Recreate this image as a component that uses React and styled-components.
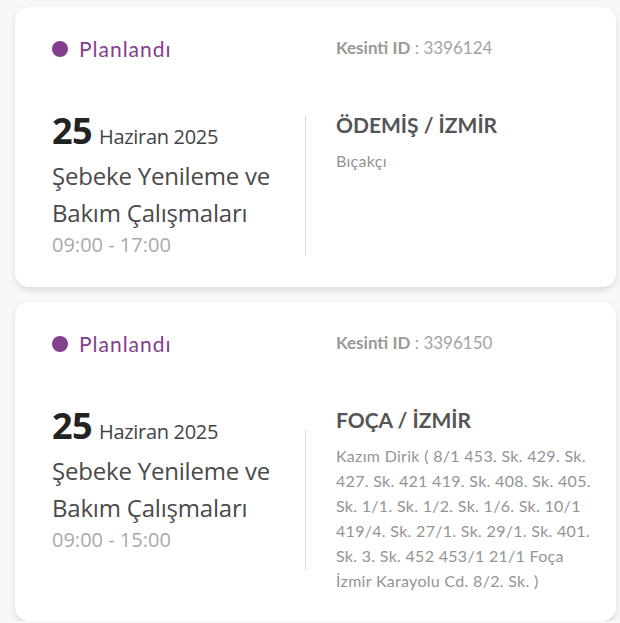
import React from "react";
import styled, { createGlobalStyle } from "styled-components";

const Global = createGlobalStyle`
  html, body { margin: 0; padding: 0; background: #f8f8f8; }
  body { font-family: "Lato", "Noto Sans", sans-serif; }
`;

const List = styled.div`
  display: flex;
  flex-direction: column;
  gap: 15px;
  width: 601px;
  padding: 7px 0 0 15px;
`;

const Card = styled.div`
  background: #fff;
  border-radius: 14px;
  box-shadow: 0 3px 6px rgba(0, 0, 0, 0.12);
  padding: 30px 20px 28px 37px;
  display: grid;
  grid-template-columns: 253px 1px 1fr;
  grid-template-rows: auto auto;
  row-gap: 50px;
`;

const Status = styled.div`
  grid-column: 1;
  display: flex;
  align-items: center;
  gap: 11px;
  font-family: "Lato", sans-serif;
  font-size: 21px;
  line-height: 24px;
  letter-spacing: 1px;
  color: #833e8e;
`;

const Dot = styled.span`
  width: 16px;
  height: 16px;
  border-radius: 50%;
  background: #833e8e;
  flex: none;
`;

const IdLine = styled.div`
  grid-column: 3;
  padding-left: 30px;
  font-family: "Lato", sans-serif;
  font-size: 17px;
  line-height: 22px;
  color: #a3a3a3;
`;

const IdLabel = styled.span`
  font-weight: 700;
  color: #999;
`;

const Left = styled.div`
  grid-column: 1;
  padding-right: 15px;
  font-family: "Open Sans", "Noto Sans", sans-serif;
`;

const DateLine = styled.div`
  display: flex;
  align-items: baseline;
  gap: 7px;
  line-height: 40px;
`;

const Day = styled.span`
  font-size: 36px;
  font-weight: 700;
  color: #222;
  letter-spacing: -0.6px;
`;

const Month = styled.span`
  font-size: 20px;
  color: #444;
  letter-spacing: -0.3px;
`;

const Title = styled.div`
  font-size: 24px;
  line-height: 37px;
  color: #4a4a4a;
  letter-spacing: -0.2px;
`;

const Time = styled.div`
  font-size: 20px;
  line-height: 28px;
  color: #aaa;
  letter-spacing: 0;
`;

const Divider = styled.div`
  grid-column: 2;
  align-self: center;
  width: 1px;
  height: 140px;
  background: #dcdcdc;
`;

const Right = styled.div`
  grid-column: 3;
  padding-left: 30px;
  font-family: "Lato", sans-serif;
`;

const Place = styled.div`
  font-size: 21px;
  font-weight: 700;
  line-height: 28px;
  color: #555;
`;

const Address = styled.div`
  margin-top: 9px;
  font-size: 16px;
  line-height: 25px;
  letter-spacing: 0.3px;
  color: #949494;
`;

const items = [
  {
    id: "3396124",
    day: "25",
    month: "Haziran 2025",
    title: "Şebeke Yenileme ve Bakım Çalışmaları",
    time: "09:00 - 17:00",
    place: "ÖDEMİŞ / İZMİR",
    address: "Bıçakçı",
  },
  {
    id: "3396150",
    day: "25",
    month: "Haziran 2025",
    title: "Şebeke Yenileme ve Bakım Çalışmaları",
    time: "09:00 - 15:00",
    place: "FOÇA / İZMİR",
    address:
      "Kazım Dirik ( 8/1 453. Sk. 429. Sk. 427. Sk. 421 419. Sk. 408. Sk. 405. Sk. 1/1. Sk. 1/2. Sk. 1/6. Sk. 10/1 419/4. Sk. 27/1. Sk. 29/1. Sk. 401. Sk. 3. Sk. 452 453/1 21/1 Foça İzmir Karayolu Cd. 8/2. Sk. )",
  },
];

export default function App() {
  return (
    <>
      <Global />
      <List>
        {items.map((it) => (
          <Card key={it.id}>
            <Status>
              <Dot />
              Planlandı
            </Status>
            <IdLine>
              <IdLabel>Kesinti ID</IdLabel> : {it.id}
            </IdLine>
            <Left>
              <DateLine>
                <Day>{it.day}</Day>
                <Month>{it.month}</Month>
              </DateLine>
              <Title>{it.title}</Title>
              <Time>{it.time}</Time>
            </Left>
            <Divider />
            <Right>
              <Place>{it.place}</Place>
              <Address>{it.address}</Address>
            </Right>
          </Card>
        ))}
      </List>
    </>
  );
}
